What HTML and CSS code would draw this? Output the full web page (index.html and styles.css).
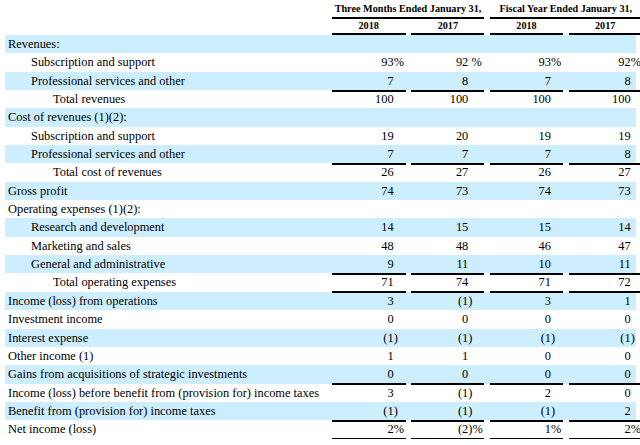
FILE: index.html
```html
<!DOCTYPE html>
<html>
<head>
<meta charset="utf-8">
<link rel="stylesheet" href="styles.css">
</head>
<body>
<div class="sheet">
  <div class="hrow h1">
    <div></div>
    <div class="grp">Three Months Ended January 31,</div>
    <div class="grp">Fiscal Year Ended January 31,</div>
  </div>
  <div class="hrow h2">
    <div></div>
    <div class="yr">2018</div>
    <div class="yr">2017</div>
    <div class="yr">2018</div>
    <div class="yr">2017</div>
  </div>

  <div class="row blue"><div class="lbl">Revenues:</div><div class="c"></div><div class="c"></div><div class="c"></div><div class="c"></div></div>
  <div class="row"><div class="lbl i1">Subscription and support</div><div class="c"><span class="v">93</span><span class="s">%</span></div><div class="c"><span class="v">92</span><span class="s"> %</span></div><div class="c"><span class="v">93</span><span class="s">%</span></div><div class="c"><span class="v">92</span><span class="s">%</span></div></div>
  <div class="row blue ul"><div class="lbl i1">Professional services and other</div><div class="c"><span class="v">7</span><span class="s"></span></div><div class="c"><span class="v">8</span><span class="s"></span></div><div class="c"><span class="v">7</span><span class="s"></span></div><div class="c"><span class="v">8</span><span class="s"></span></div></div>
  <div class="row"><div class="lbl i2">Total revenues</div><div class="c"><span class="v">100</span><span class="s"></span></div><div class="c"><span class="v">100</span><span class="s"></span></div><div class="c"><span class="v">100</span><span class="s"></span></div><div class="c"><span class="v">100</span><span class="s"></span></div></div>

  <div class="row blue"><div class="lbl">Cost of revenues (1)(2):</div><div class="c"></div><div class="c"></div><div class="c"></div><div class="c"></div></div>
  <div class="row"><div class="lbl i1">Subscription and support</div><div class="c"><span class="v">19</span><span class="s"></span></div><div class="c"><span class="v">20</span><span class="s"></span></div><div class="c"><span class="v">19</span><span class="s"></span></div><div class="c"><span class="v">19</span><span class="s"></span></div></div>
  <div class="row blue ul"><div class="lbl i1">Professional services and other</div><div class="c"><span class="v">7</span><span class="s"></span></div><div class="c"><span class="v">7</span><span class="s"></span></div><div class="c"><span class="v">7</span><span class="s"></span></div><div class="c"><span class="v">8</span><span class="s"></span></div></div>
  <div class="row"><div class="lbl i2">Total cost of revenues</div><div class="c"><span class="v">26</span><span class="s"></span></div><div class="c"><span class="v">27</span><span class="s"></span></div><div class="c"><span class="v">26</span><span class="s"></span></div><div class="c"><span class="v">27</span><span class="s"></span></div></div>
  <div class="row blue"><div class="lbl">Gross profit</div><div class="c"><span class="v">74</span><span class="s"></span></div><div class="c"><span class="v">73</span><span class="s"></span></div><div class="c"><span class="v">74</span><span class="s"></span></div><div class="c"><span class="v">73</span><span class="s"></span></div></div>

  <div class="row"><div class="lbl">Operating expenses (1)(2):</div><div class="c"></div><div class="c"></div><div class="c"></div><div class="c"></div></div>
  <div class="row blue"><div class="lbl i1">Research and development</div><div class="c"><span class="v">14</span><span class="s"></span></div><div class="c"><span class="v">15</span><span class="s"></span></div><div class="c"><span class="v">15</span><span class="s"></span></div><div class="c"><span class="v">14</span><span class="s"></span></div></div>
  <div class="row"><div class="lbl i1">Marketing and sales</div><div class="c"><span class="v">48</span><span class="s"></span></div><div class="c"><span class="v">48</span><span class="s"></span></div><div class="c"><span class="v">46</span><span class="s"></span></div><div class="c"><span class="v">47</span><span class="s"></span></div></div>
  <div class="row blue ul"><div class="lbl i1">General and administrative</div><div class="c"><span class="v">9</span><span class="s"></span></div><div class="c"><span class="v">11</span><span class="s"></span></div><div class="c"><span class="v">10</span><span class="s"></span></div><div class="c"><span class="v">11</span><span class="s"></span></div></div>
  <div class="row ul"><div class="lbl i2">Total operating expenses</div><div class="c"><span class="v">71</span><span class="s"></span></div><div class="c"><span class="v">74</span><span class="s"></span></div><div class="c"><span class="v">71</span><span class="s"></span></div><div class="c"><span class="v">72</span><span class="s"></span></div></div>

  <div class="row blue"><div class="lbl">Income (loss) from operations</div><div class="c"><span class="v">3</span><span class="s"></span></div><div class="c"><span class="v">(1</span><span class="s">)</span></div><div class="c"><span class="v">3</span><span class="s"></span></div><div class="c"><span class="v">1</span><span class="s"></span></div></div>
  <div class="row"><div class="lbl">Investment income</div><div class="c"><span class="v">0</span><span class="s"></span></div><div class="c"><span class="v">0</span><span class="s"></span></div><div class="c"><span class="v">0</span><span class="s"></span></div><div class="c"><span class="v">0</span><span class="s"></span></div></div>
  <div class="row blue"><div class="lbl">Interest expense</div><div class="c"><span class="v">(1</span><span class="s">)</span></div><div class="c"><span class="v">(1</span><span class="s">)</span></div><div class="c"><span class="v">(1</span><span class="s">)</span></div><div class="c"><span class="v">(1</span><span class="s">)</span></div></div>
  <div class="row"><div class="lbl">Other income (1)</div><div class="c"><span class="v">1</span><span class="s"></span></div><div class="c"><span class="v">1</span><span class="s"></span></div><div class="c"><span class="v">0</span><span class="s"></span></div><div class="c"><span class="v">0</span><span class="s"></span></div></div>
  <div class="row blue ul"><div class="lbl">Gains from acquisitions of strategic investments</div><div class="c"><span class="v">0</span><span class="s"></span></div><div class="c"><span class="v">0</span><span class="s"></span></div><div class="c"><span class="v">0</span><span class="s"></span></div><div class="c"><span class="v">0</span><span class="s"></span></div></div>
  <div class="row"><div class="lbl">Income (loss) before benefit from (provision for) income taxes</div><div class="c"><span class="v">3</span><span class="s"></span></div><div class="c"><span class="v">(1</span><span class="s">)</span></div><div class="c"><span class="v">2</span><span class="s"></span></div><div class="c"><span class="v">0</span><span class="s"></span></div></div>
  <div class="row blue ul"><div class="lbl">Benefit from (provision for) income taxes</div><div class="c"><span class="v">(1</span><span class="s">)</span></div><div class="c"><span class="v">(1</span><span class="s">)</span></div><div class="c"><span class="v">(1</span><span class="s">)</span></div><div class="c"><span class="v">2</span><span class="s"></span></div></div>
  <div class="row dbl"><div class="lbl">Net income (loss)</div><div class="c"><span class="v">2</span><span class="s">%</span></div><div class="c"><span class="v">(2</span><span class="s">)%</span></div><div class="c"><span class="v">1</span><span class="s">%</span></div><div class="c"><span class="v">2</span><span class="s">%</span></div></div>
</div>
</body>
</html>
```

FILE: styles.css
```css
html, body {
  margin: 0;
  padding: 0;
  background: #ffffff;
}

body {
  font-family: "Liberation Serif", "Times New Roman", serif;
  color: #000000;
}

.sheet {
  width: 631px;
  padding-left: 5px;
}

.hrow,
.row {
  display: grid;
  grid-template-columns: 321px 74px 73px 73px 73px;
  column-gap: 5.67px;
}

.hrow {
  font-weight: bold;
  font-size: 10.2px;
  text-align: center;
}

.h1 {
  height: 19px;
}

.h1 .grp {
  grid-column: span 2;
  border-bottom: 2px solid #000;
  line-height: 17px;
  align-self: end;
}

.h2 {
  height: 16px;
}

.yr {
  border-bottom: 2px solid #000;
  line-height: 14px;
  align-self: end;
}

.row {
  height: 18.35px;
  font-size: 12.4px;
  line-height: 18px;
}

.row.blue {
  background: #cceeff;
}

.lbl {
  padding-left: 3px;
  white-space: nowrap;
}

.lbl.i1 {
  padding-left: 26px;
}

.lbl.i2 {
  padding-left: 48px;
}

.c {
  display: flex;
  justify-content: flex-end;
  box-sizing: border-box;
}

.s {
  display: inline-block;
  white-space: pre;
  text-align: left;
}

.c:nth-child(2) .s { width: 12px; }
.c:nth-child(3) .s { width: 16px; }
.c:nth-child(4) .s { width: 12px; }
.c:nth-child(5) .s { width: 11px; }

.row.ul .c {
  border-bottom: 2px solid #000;
}

.row.dbl .c {
  border-bottom: 4px double #000;
}
```
